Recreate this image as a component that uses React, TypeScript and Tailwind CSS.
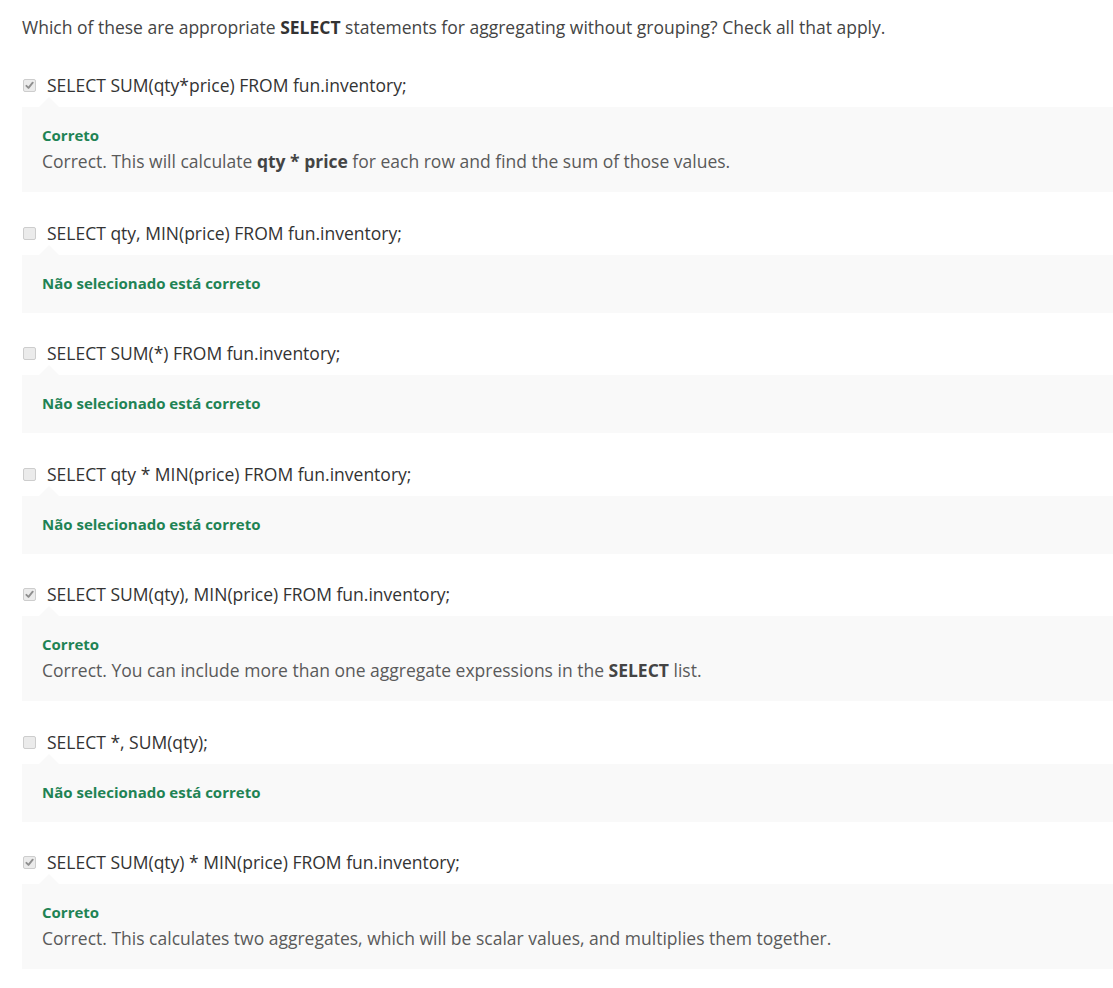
import React from "react";

type Opt = {
  text: string;
  checked: boolean;
  explanation?: React.ReactNode;
};

const options: Opt[] = [
  {
    text: "SELECT SUM(qty*price) FROM fun.inventory;",
    checked: true,
    explanation: (
      <>
        Correct. This will calculate <b className="font-bold text-[#444]">qty * price</b> for each row and find the sum of those values.
      </>
    ),
  },
  { text: "SELECT qty, MIN(price) FROM fun.inventory;", checked: false },
  { text: "SELECT SUM(*) FROM fun.inventory;", checked: false },
  { text: "SELECT qty * MIN(price) FROM fun.inventory;", checked: false },
  {
    text: "SELECT SUM(qty), MIN(price) FROM fun.inventory;",
    checked: true,
    explanation: (
      <>
        Correct. You can include more than one aggregate expressions in the <b className="font-bold text-[#444]">SELECT</b> list.
      </>
    ),
  },
  { text: "SELECT *, SUM(qty);", checked: false },
  {
    text: "SELECT SUM(qty) * MIN(price) FROM fun.inventory;",
    checked: true,
    explanation: (
      <>Correct. This calculates two aggregates, which will be scalar values, and multiplies them together.</>
    ),
  },
];

function Box({ checked }: { checked: boolean }) {
  return (
    <span className="relative mt-[6px] inline-flex h-[13px] w-[13px] shrink-0 items-center justify-center rounded-[2px] border border-[#cdcdcd] bg-[#ebebeb]">
      {checked && (
        <svg width="9" height="9" viewBox="0 0 9 9" className="block">
          <path d="M1.4 4.8 L3.5 6.9 L7.7 1.7" fill="none" stroke="#8f8f8f" strokeWidth="1.9" strokeLinecap="round" strokeLinejoin="round" />
        </svg>
      )}
    </span>
  );
}

export default function App() {
  return (
    <div
      className="min-h-[988px] bg-white pl-[22px] pt-[15px] text-[17.5px] leading-6 text-[#3c3c3c]"
      style={{ fontFamily: '"Open Sans", "Liberation Sans", sans-serif' }}
    >
      <p className="text-[#444]">
        Which of these are appropriate <b className="font-bold text-[#333]">SELECT</b> statements for aggregating without grouping? Check all that apply.
      </p>
      <div className="mt-[34px] flex flex-col gap-[28.5px]">
        {options.map((o, i) => (
          <div key={i}>
            <div className="flex items-start gap-[11px] pl-[1px]">
              <Box checked={o.checked} />
              <span className="text-[#333]">{o.text}</span>
            </div>
            <div className="relative mt-[10px] bg-[#f9f9f9] pl-5 pt-5" style={{ paddingBottom: o.explanation ? 19 : 22 }}>
              <span className="absolute left-[17px] top-[-10px] h-0 w-0 border-x-[10px] border-b-[10px] border-x-transparent border-b-[#f9f9f9]" />
              <div className="text-[15px] font-bold leading-4 text-[#1f8354]">
                {o.checked ? "Correto" : "Não selecionado está correto"}
              </div>
              {o.explanation && <div className="mt-1.5 leading-6 text-[#5a5a5a]">{o.explanation}</div>}
            </div>
          </div>
        ))}
      </div>
    </div>
  );
}
